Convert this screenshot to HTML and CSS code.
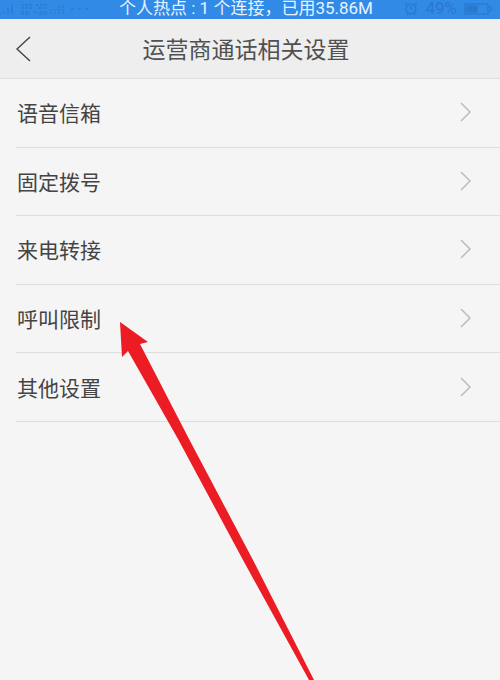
FILE: index.html
```
<!DOCTYPE html>
<html lang="zh-CN">
<head>
    <meta charset="UTF-8">
    <meta name="viewport" content="width=device-width, initial-scale=1.0">
    <title>运营商通话相关设置</title>
    <link rel="stylesheet" href="styles.css">
</head>
<body>

    <div class="status-bar">
        <svg class="signal" width="90" height="14" viewBox="0 0 90 14" fill="none" stroke="currentColor" aria-hidden="true">
            <path d="M0 12h1M4 12V9M8 12V6M12 12V3" stroke-width="2"/>
            <path d="M21 3h12M36 3h12M21 6h12M38 6h9M21 10h9M34 10h4M40 10h8M21 12h9M39 12h9" stroke-width="2" stroke-dasharray="3 1"/>
            <path d="M51 12V8M55 12V6M59 12V4M63 12V2" stroke-width="2" stroke-dasharray="2 1"/>
            <path d="M71 7h3M78 7h3M85 7h3" stroke-width="2"/>
        </svg>
        <span class="hotspot">个人热点 : 1 个连接，已用35.86M</span>
        <div class="battery">
            <svg width="14" height="14" viewBox="0 0 14 14" fill="none" stroke="currentColor" stroke-width="1.2" aria-hidden="true">
                <circle cx="7" cy="7" r="5"/>
                <path d="M7 4v3h2M1 3l2-2M13 3l-2-2M3 13l1-2M11 13l-1-2"/>
            </svg>
            <span>49%</span>
            <svg width="28" height="12" viewBox="0 0 28 12" fill="none" stroke="currentColor" stroke-width="1.2" aria-hidden="true">
                <rect x="1" y="1" width="23" height="10"/>
                <path d="M24 4h3v4h-3"/>
                <path d="M3 3h10v6H3z" fill="currentColor"/>
            </svg>
        </div>
    </div>

    <header class="header">
        <button class="btn-back" aria-label="返回">
            <svg width="16" height="26" viewBox="0 0 16 26" fill="none" stroke="#444" stroke-width="1.4">
                <path d="M15 1L2 13l13 12"/>
            </svg>
        </button>
        <h1 class="title">运营商通话相关设置</h1>
    </header>

    <main class="content">
        <ul class="list">
            <li class="row">
                <a class="link" href="#voicemail">语音信箱
                    <svg class="chevron" width="12" height="20" viewBox="0 0 12 20"><path d="M1 1l9 9-9 9"/></svg>
                </a>
            </li>
            <li class="row">
                <a class="link" href="#fixed-dialing">固定拨号
                    <svg class="chevron" width="12" height="20" viewBox="0 0 12 20"><path d="M1 1l9 9-9 9"/></svg>
                </a>
            </li>
            <li class="row">
                <a class="link" href="#forwarding">来电转接
                    <svg class="chevron" width="12" height="20" viewBox="0 0 12 20"><path d="M1 1l9 9-9 9"/></svg>
                </a>
            </li>
            <li class="row">
                <a class="link" href="#barring">呼叫限制
                    <svg class="chevron" width="12" height="20" viewBox="0 0 12 20"><path d="M1 1l9 9-9 9"/></svg>
                </a>
            </li>
            <li class="row">
                <a class="link" href="#other">其他设置
                    <svg class="chevron" width="12" height="20" viewBox="0 0 12 20"><path d="M1 1l9 9-9 9"/></svg>
                </a>
            </li>
        </ul>
        <!-- arrow pointing at the call barring row -->
        <svg class="arrow" width="200" height="358" viewBox="0 0 200 358" aria-hidden="true">
            <path d="M0 0L28 20l-8 2L69 117l64 121L194 358h-5L123 238 58 117 8 29l-6 6z" fill="#ec1c24"/>
        </svg>
    </main>

</body>
</html>
```

FILE: styles.css
```
* {
    box-sizing: border-box;
}

body {
    display: flex;
    flex-direction: column;
    min-height: 100vh;
    margin: 0;
    font-family: "Noto Sans CJK SC", sans-serif;
    background-color: #f5f5f5;
    color: #444444;
}

.status-bar {
    display: grid;
    grid-template-columns: 1fr auto 1fr;
    align-items: center;
    height: 19px;
    padding: 0 8px 2px 0;
    line-height: 17px;
    background-color: #328ae7;
    color: #2878cd;
}

.signal {
    opacity: 0.6;
}

.hotspot {
    font-family: Roboto, "Noto Sans CJK SC", sans-serif;
    font-size: 17px;
    color: #e6f3ff;
    white-space: pre;
}

.battery {
    display: flex;
    align-items: center;
    justify-content: flex-end;
    gap: 7px;
    font-family: Roboto, sans-serif;
    font-size: 17px;
}

.header {
    display: grid;
    grid-template-columns: 44px 1fr 52px;
    align-items: center;
    height: 60px;
    background-color: #eeeeee;
    border-bottom: 1px solid #dddddd;
}

.btn-back {
    display: flex;
    padding: 0 0 0 15px;
    border: none;
    background: none;
    cursor: pointer;
}

.title {
    margin: 0;
    padding-bottom: 2px;
    font-size: 23px;
    font-weight: 400;
    line-height: 32px;
    text-align: center;
    color: #505050;
}

.content {
    position: relative;
    flex: 1;
    overflow: hidden;
}

.list {
    display: grid;
    grid-auto-rows: 1fr;
    min-height: 343px;
    margin: 0;
    padding: 0 0 0 16px;
    list-style: none;
}

.row {
    display: flex;
    border-bottom: 1px solid #dedede;
}

.link {
    display: flex;
    flex: 1;
    align-items: center;
    justify-content: space-between;
    padding: 0 28px 1px 1px;
    font-size: 21px;
    color: inherit;
    text-decoration: none;
}

.chevron {
    fill: none;
    stroke: #bcbcbc;
    stroke-width: 1.5;
}

.arrow {
    position: absolute;
    top: 243px;
    left: 120px;
    pointer-events: none;
}
```
